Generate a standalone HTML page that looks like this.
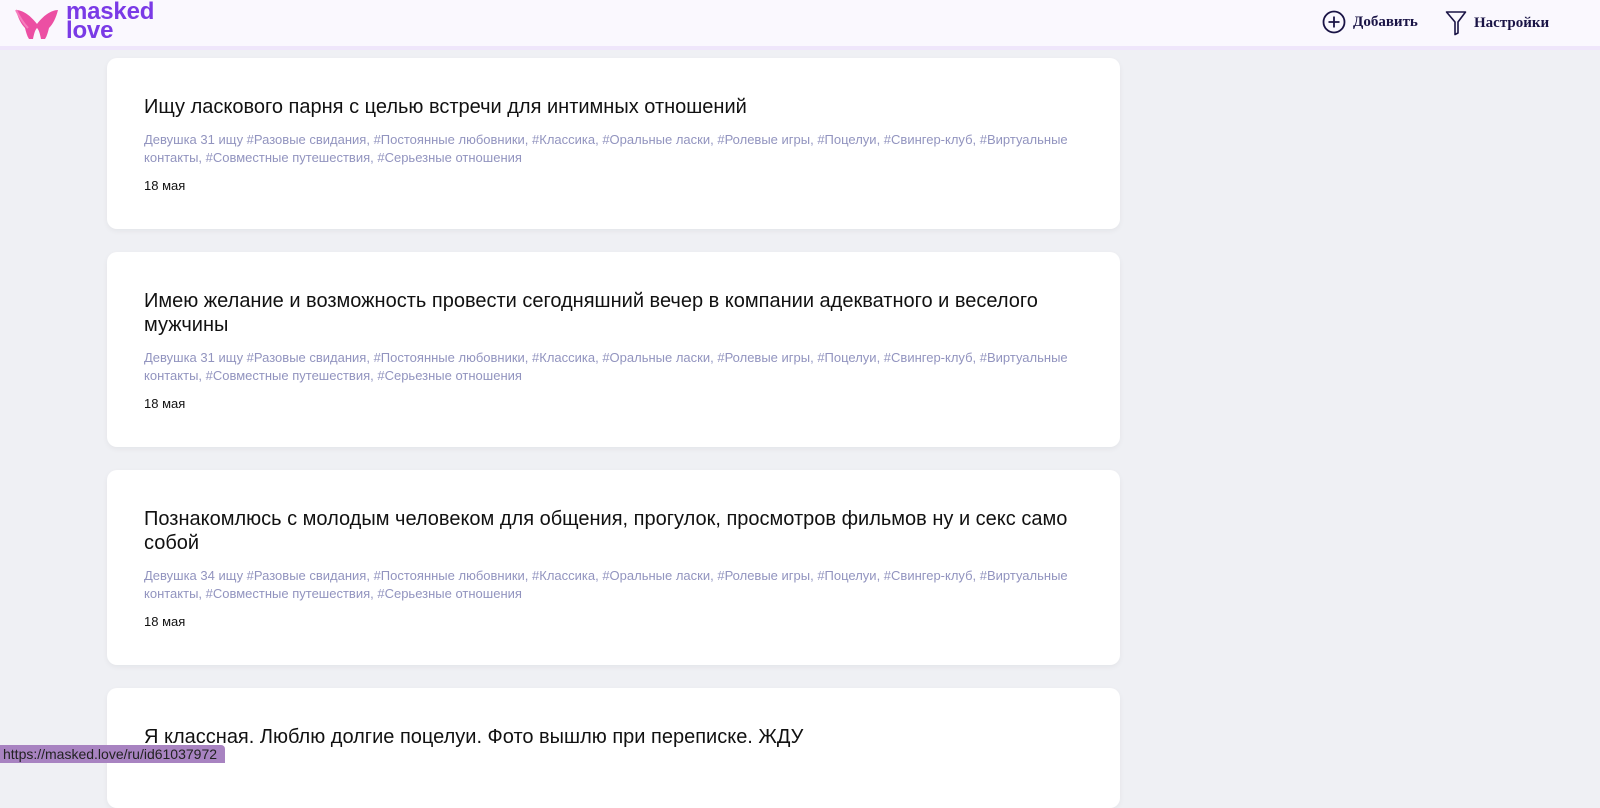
<!DOCTYPE html>
<html><head><meta charset="utf-8"><style>
*{margin:0;padding:0;box-sizing:border-box}
body{width:1600px;height:778px;overflow:hidden;background:#eff0f4;font-family:"Liberation Sans",sans-serif;position:relative}
.hdr{position:absolute;left:0;top:0;width:1600px;height:50px;background:#faf8fe;border-bottom:4px solid #efe6fb;z-index:2}
.logo{position:absolute;left:15px;top:4px}
.lt{position:absolute;left:66px;top:2px;color:#7a3ae6;font-weight:bold;font-size:24px;line-height:19px;letter-spacing:-0.2px}
.nav{position:absolute;top:10px;display:flex;align-items:center;font-family:"Liberation Serif",serif;font-weight:bold;font-size:15px;color:#1a1446}
.card{position:absolute;left:107px;width:1013px;background:#fff;border-radius:10px;box-shadow:0 2px 6px rgba(0,0,0,0.05);padding:37px 37px 0 37px}
.t{font-size:20px;line-height:24px;color:#111}
.g{font-size:13px;line-height:18px;color:#9294bf;margin-top:12px}
.d{font-size:13px;line-height:18px;color:#111;margin-top:10px}
.st{position:absolute;left:0;top:745px;height:18px;background:#a883c1;color:#222;font-size:14px;line-height:18px;padding:0 8px 0 3px;border-top-right-radius:4px;z-index:3}
</style></head><body>
<div class="hdr">
<svg class="logo" width="44" height="36" viewBox="0 0 44 36"><path d="M1 6 C8 6 16 12 22 20 C28 12 36 6 43 6 C41 14 38 20 34 24 C33 28 32 32 30 35 L26 35 C25 30 24 26 22 24 C20 26 19 30 18 35 L14 35 C12 32 11 28 10 24 C6 20 3 14 1 6 Z" fill="#ec4fa3"/><path d="M1 6 C5 14 9 20 13 24" stroke="#f67dbd" stroke-width="2" fill="none"/></svg>
<div class="lt">masked<br>love</div>
<div class="nav" style="left:1322px"><svg width="24" height="24" viewBox="0 0 24 24"><circle cx="12" cy="12" r="10.5" fill="none" stroke="#1a1446" stroke-width="1.8"/><path d="M12 6.5v11M6.5 12h11" stroke="#1a1446" stroke-width="1.8"/></svg><span style="margin-left:7px">Добавить</span></div>
<div class="nav" style="left:1445px"><svg width="22" height="26" viewBox="0 0 22 26"><path d="M1.5 2h19l-7.5 10v11l-3 1.5v-12.5z" fill="none" stroke="#1a1446" stroke-width="1.6" stroke-linejoin="round"/></svg><span style="margin-left:7px">Настройки</span></div>
</div>
<div class="card" style="top:58px;height:171px"><div class="t">Ищу ласкового парня с целью встречи для интимных отношений</div><div class="g">Девушка 31 ищу #Разовые свидания, #Постоянные любовники, #Классика, #Оральные ласки, #Ролевые игры, #Поцелуи, #Свингер-клуб, #Виртуальные контакты, #Совместные путешествия, #Серьезные отношения</div><div class="d">18 мая</div></div>
<div class="card" style="top:252px;height:195px"><div class="t">Имею желание и возможность провести сегодняшний вечер в компании адекватного и веселого мужчины</div><div class="g">Девушка 31 ищу #Разовые свидания, #Постоянные любовники, #Классика, #Оральные ласки, #Ролевые игры, #Поцелуи, #Свингер-клуб, #Виртуальные контакты, #Совместные путешествия, #Серьезные отношения</div><div class="d">18 мая</div></div>
<div class="card" style="top:470px;height:195px"><div class="t">Познакомлюсь с молодым человеком для общения, прогулок, просмотров фильмов ну и секс само собой</div><div class="g">Девушка 34 ищу #Разовые свидания, #Постоянные любовники, #Классика, #Оральные ласки, #Ролевые игры, #Поцелуи, #Свингер-клуб, #Виртуальные контакты, #Совместные путешествия, #Серьезные отношения</div><div class="d">18 мая</div></div>
<div class="card" style="top:688px;height:120px"><div class="t">Я классная. Люблю долгие поцелуи. Фото вышлю при переписке. ЖДУ</div></div>
<div class="st">https://masked.love/ru/id61037972</div>
</body></html>
